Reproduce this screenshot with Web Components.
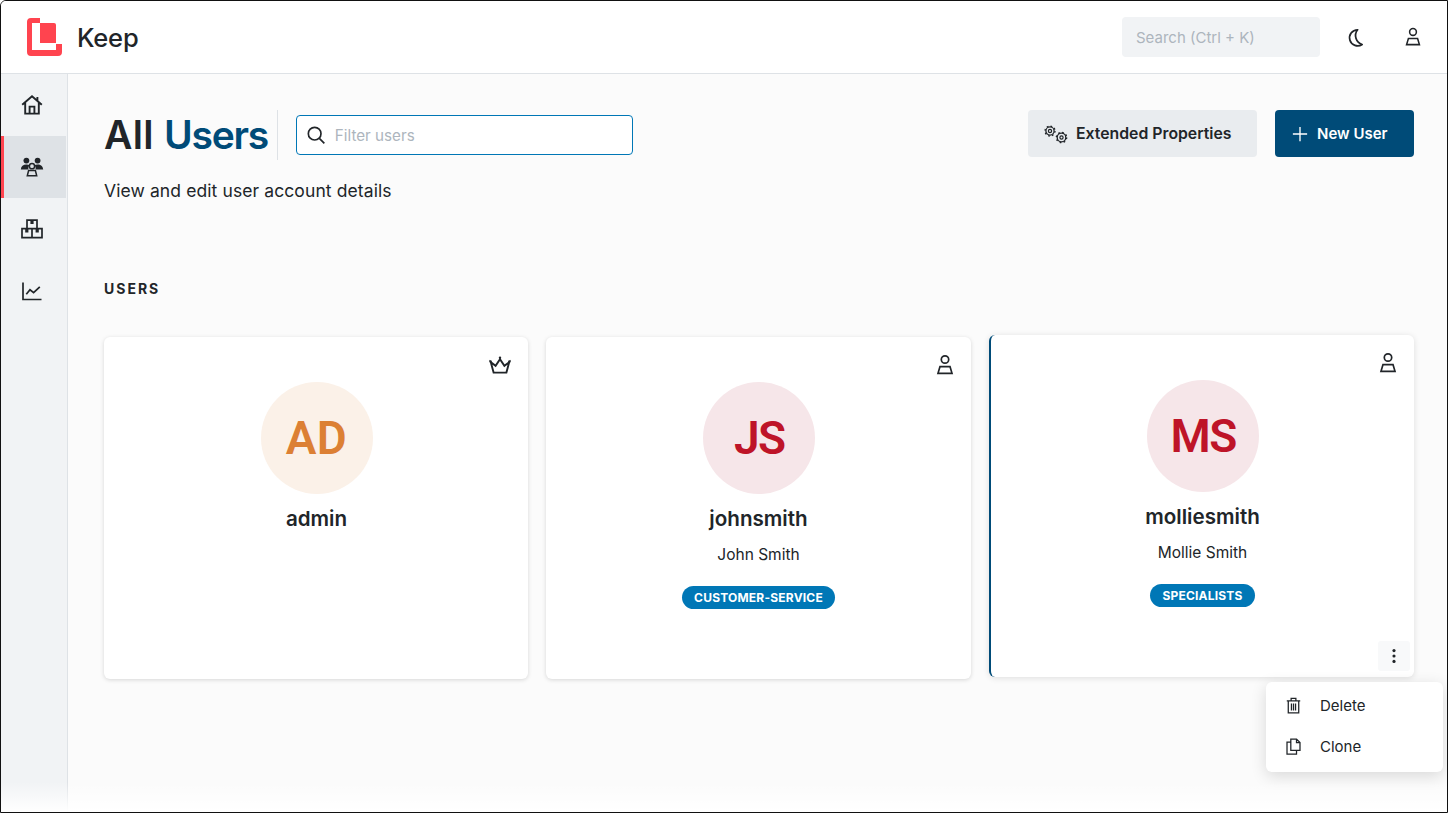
<!DOCTYPE html>
<html lang="en"><head><meta charset="utf-8"><title>Keep</title>
<style>
html,body{margin:0;height:100%;background:#fff}
body{font-family:Inter,"Liberation Sans",sans-serif;color:#212529}
</style></head><body>
<k-app>
  <k-header slot="header"></k-header>
  <k-sidebar slot="side">
    <k-nav icon="home"></k-nav>
    <k-nav icon="users" active></k-nav>
    <k-nav icon="boxes"></k-nav>
    <k-nav icon="chart"></k-nav>
  </k-sidebar>
  <k-page-head></k-page-head>
  <k-section-title>USERS</k-section-title>
  <k-grid>
    <k-user-card initials="AD" tone="orange" name="admin" role="crown"></k-user-card>
    <k-user-card initials="JS" tone="red" name="johnsmith" full="John Smith" group="CUSTOMER-SERVICE" role="user"></k-user-card>
    <k-user-card initials="MS" tone="red" name="molliesmith" full="Mollie Smith" group="SPECIALISTS" role="user" hovered></k-user-card>
  </k-grid>
</k-app>
<script>
const ICONS={
home:'<path d="M2.2 11.8 12 3.2l9.8 8.6M5.2 9.6V20.6H18.8V9.6M9.6 20.6V13.6h4.8v7M17.4 7.9V4" fill="none" stroke="currentColor" stroke-width="1.9"/>',
users:'<circle cx="6.4" cy="5.6" r="2.9" fill="currentColor"/><circle cx="17.6" cy="5.6" r="2.9" fill="currentColor"/><path d="M.8 14.6c.3-3.6 2.4-5.2 5.6-5.2 1.4 0 2.5.3 3.3.9-1.1 1-1.6 2.3-1.3 4.3zM23.2 14.6c-.3-3.6-2.4-5.2-5.6-5.2-1.4 0-2.5.3-3.3.9 1.1 1 1.6 2.3 1.3 4.3z" fill="currentColor"/><circle cx="12" cy="11.2" r="2.6" fill="none" stroke="currentColor" stroke-width="1.5"/><path d="M8.6 15.6h6.8l1.3 5.2H7.3z" fill="none" stroke="currentColor" stroke-width="1.5"/>',
boxes:'<path d="M7 11.6V3.2H17V11.6M2 11.6H22V20.6H2ZM12 11.6V20.6" fill="none" stroke="currentColor" stroke-width="1.7"/><path d="M10.4 3.2H13.6V7H10.4ZM5.2 11.6H8.4V15.4H5.2ZM15.6 11.6H18.8V15.4H15.6Z" fill="currentColor"/>',
chart:'<path d="M3 3.5V20.5H21.5" fill="none" stroke="currentColor" stroke-width="1.7"/><path d="M6.3 15.2 10 10.8l3.6 2.9 6.2-5.9" fill="none" stroke="currentColor" stroke-width="1.7"/>',
moon:'<path d="M14.4 3.2A9.2 9.2 0 1 0 19.6 20 10.6 10.6 0 0 1 14.4 3.2Z" fill="none" stroke="currentColor" stroke-width="2" stroke-linejoin="round"/>',
user:'<circle cx="12" cy="6.5" r="3.7" fill="none" stroke="currentColor" stroke-width="1.7"/><path d="M7 13.6h10l2 6.7H5z" fill="none" stroke="currentColor" stroke-width="1.7"/>',
crown:'<path d="M5.6 19.6H18.4L21.2 9.2l-4.8 3.6L12 6.2l-4.4 6.6L2.8 9.2Z" fill="none" stroke="currentColor" stroke-width="1.9"/><circle cx="2.6" cy="8.4" r="1.2" fill="currentColor"/><circle cx="21.4" cy="8.4" r="1.2" fill="currentColor"/><circle cx="12" cy="4.8" r="1.2" fill="currentColor"/>',
gears:'<g fill="none" stroke="currentColor"><circle cx="6" cy="9" r="1.6" stroke-width="1.2"/><circle cx="6" cy="9" r="4.1" stroke-width="1.3"/><circle cx="6" cy="9" r="5" stroke-width="1.3" stroke-dasharray="1.7 2.22"/><circle cx="17.5" cy="15.5" r="1.6" stroke-width="1.2"/><circle cx="17.5" cy="15.5" r="4.3" stroke-width="1.3"/><circle cx="17.5" cy="15.5" r="5.2" stroke-width="1.3" stroke-dasharray="1.7 2.38"/></g>',
plus:'<path d="M12 2.5v19M2.5 12h19" fill="none" stroke="currentColor" stroke-width="1.8"/>',
search:'<circle cx="10.4" cy="10.4" r="7.6" fill="none" stroke="currentColor" stroke-width="2"/><path d="M16 16l6 6" fill="none" stroke="currentColor" stroke-width="2"/>',
dots:'<circle cx="12" cy="5.5" r="1.9" fill="currentColor"/><circle cx="12" cy="12" r="1.9" fill="currentColor"/><circle cx="12" cy="18.5" r="1.9" fill="currentColor"/>',
trash:'<path d="M3.5 6.2h17M9 6V3h6v3M5.4 6.2V21.4H18.6V6.2M9.4 9.4v9M12 9.4v9M14.6 9.4v9" fill="none" stroke="currentColor" stroke-width="1.6"/>',
copy:'<path d="M8.6 16.8V2.6h7.2l4.4 4.4v9.8zM15.8 2.6V7h4.4M8.6 6.6H3.8V21.6H15.8V16.8" fill="none" stroke="currentColor" stroke-width="1.6"/>'
};
function def(name,css,html,init){
  customElements.define(name,class extends HTMLElement{
    connectedCallback(){
      if(this.shadowRoot)return;
      const r=this.attachShadow({mode:'open'});
      r.innerHTML='<style>'+css+'</style>'+(typeof html==='function'?html(this):html);
      if(init)init(this,r);
    }
  });
}
def('k-icon',':host{display:inline-flex;flex:none;width:var(--s,24px);height:var(--s,24px)}svg{width:100%;height:100%;display:block}',
 h=>`<svg viewBox="0 0 24 24" aria-hidden="true">${ICONS[h.getAttribute('name')]||''}</svg>`);
def('k-app',`:host{display:grid;box-sizing:border-box;height:813px;width:1448px;grid-template-columns:67px 1fr;grid-template-rows:73px 1fr;border:1px solid #111;border-radius:6px 0 0 0;overflow:hidden;background:#fbfbfb;position:relative}
 .h{grid-column:1/3}.m{padding:36px 33px 0 36px;min-width:0;position:relative}
 .fade{position:absolute;left:0;right:0;bottom:0;height:30px;background:linear-gradient(rgba(255,255,255,0),#fff);pointer-events:none;z-index:9}`,
 `<div class="h"><slot name="header"></slot></div><slot name="side"></slot><div class="m"><slot></slot></div><div class="fade"></div>`);
def('k-header',`:host{display:flex;align-items:center;height:73px;box-sizing:border-box;border-bottom:1px solid #dee2e6;background:#fff;padding:0 24px 0 25px}
 .logo{width:36px;height:40px;flex:none;display:block}
 .t{font-size:25.5px;font-weight:500;margin-left:15px;letter-spacing:-.2px;color:#212529}
 .sp{flex:1}
 .s{width:198px;height:40px;box-sizing:border-box;background:#f1f3f5;border-radius:4px;padding:0 14px;display:flex;align-items:center;font-size:15px;color:#adb5bd}
 .ic{display:flex;align-items:center;justify-content:center;color:#212529}
 .moon{margin-left:25px;width:21px;--s:21px}.usr{margin-left:36px;width:21px;--s:22px}`,
 `<svg class="logo" viewBox="26 17 36 40"><path d="M31 18h9v26h22v8a4 4 0 0 1-4 4H31a4 4 0 0 1-4-4V22a4 4 0 0 1 4-4z" fill="#ff444f"/><path d="M32 23h8v21h16v6H32z" fill="#fff"/><path d="M40 23h14a2 2 0 0 1 2 2v18H40z" fill="#ff444f"/></svg>
 <span class="t">Keep</span><span class="sp"></span><div class="s">Search (Ctrl + K)</div>
 <div class="ic moon"><k-icon name="moon"></k-icon></div><div class="ic usr"><k-icon name="user"></k-icon></div>`);
def('k-sidebar',`:host{display:block;background:#f1f3f5;border-right:1px solid #dee2e6;box-sizing:border-box;width:67px}`,`<slot></slot>`);
def('k-nav',`:host{display:flex;align-items:center;justify-content:center;height:62px;box-sizing:border-box;width:65px;padding-right:3px;color:#212529;--s:24px}
 :host([active]){background:#dee2e6;border-left:3px solid #ff444f;padding-right:6px}`,
 h=>`<k-icon name="${h.getAttribute('icon')}"></k-icon>`);
def('k-page-head',`:host{display:block;height:169px}
 .top{display:flex;align-items:flex-start}
 h1{margin:0;font-size:39px;font-weight:600;line-height:50px;letter-spacing:.35px;color:#212529;padding-right:9px;border-right:1px solid #dee2e6;white-space:nowrap}
 h1 b{font-weight:600;color:#004b78;letter-spacing:-1.25px}
 .f{margin:5px 0 0 18px;width:337px;height:40px;box-sizing:border-box;border:1px solid #0077b6;border-radius:4px;background:#fff;display:flex;align-items:center;padding-left:9px;font-size:15.2px;color:#adb5bd;--s:20px}
 .f k-icon{color:#212529;margin-right:9px}
 .sp{flex:1}
 .btn{height:47px;box-sizing:border-box;border-radius:4px;display:flex;align-items:center;font-size:15px;font-weight:600}
 .x{background:#e9ecef;color:#212529;width:229px;padding-left:16px;margin-right:18px;--s:24px;font-size:15.8px}.x k-icon{margin-right:8px}
 .n{background:#004b78;color:#fff;width:139px;padding-left:16px;--s:18px}.n k-icon{margin-right:8px}
 p{margin:17px 0 0;font-size:17.5px;letter-spacing:.1px;line-height:28px;color:#212529}`,
 `<div class="top"><h1>All <b>Users</b></h1><div class="f"><k-icon name="search"></k-icon>Filter users</div><span class="sp"></span>
  <div class="btn x"><k-icon name="gears"></k-icon>Extended Properties</div><div class="btn n"><k-icon name="plus"></k-icon>New User</div></div>
  <p>View and edit user account details</p>`);
def('k-section-title',`:host{display:block;font-size:14px;font-weight:700;letter-spacing:2px;line-height:20px;color:#212529;margin-bottom:38px;height:20px}`,`<slot></slot>`);
def('k-grid',`:host{display:grid;grid-template-columns:424fr 425fr 425fr;gap:18px}`,`<slot></slot>`);
def('k-user-card',`:host{display:flex;flex-direction:column;align-items:center;position:relative;box-sizing:border-box;height:342px;padding-top:45px;background:#fff;border-radius:6px;box-shadow:0 1px 4px rgba(0,0,0,.15)}
 :host([role=crown]){padding-left:1px}
 :host([hovered]){transform:translateY(-2px);border-left:2px solid #004b78;box-shadow:0 1px 6px rgba(0,0,0,.12)}
 .r{position:absolute;top:16px;right:14px;--s:24px;color:#212529}.r.crown{right:16px}
 .a{width:112px;height:112px;box-sizing:border-box;border-radius:50%;display:flex;align-items:center;justify-content:center;font-family:Roboto,sans-serif;font-size:46px;font-weight:600}
 .orange{background:#fbf1e8;color:#dc8034;letter-spacing:.5px}.red{background:#f6e6e9;color:#be1428;letter-spacing:-1.5px;padding-left:1.5px}
 .n{margin-top:13px;font-size:20.6px;font-weight:600;line-height:24px;color:#212529}
 .f{margin-top:14px;font-size:15.5px;line-height:20px;color:#212529}
 .g{margin-top:21px;height:23px;box-sizing:border-box;display:flex;align-items:center;padding:0 12px 1px;border-radius:12px;background:#0077b6;color:#fff;font-size:12px;font-weight:700;letter-spacing:.2px}
 .k{position:absolute;right:4px;bottom:6px;width:32px;height:30px;background:#f8f9fa;border-radius:3px;display:flex;align-items:center;justify-content:center;--s:20px;color:#212529}`,
 h=>{const a=n=>h.getAttribute(n);return `<div class="r ${a('role')}"><k-icon name="${a('role')}"></k-icon></div>
  <div class="a ${a('tone')}">${a('initials')}</div><div class="n">${a('name')}</div>
  ${a('full')?`<div class="f">${a('full')}</div>`:''}${a('group')?`<div class="g">${a('group')}</div>`:''}
  ${h.hasAttribute('hovered')?'<div class="k"><k-icon name="dots"></k-icon></div><k-menu></k-menu>':''}`});
def('k-menu',`:host{position:absolute;top:calc(100% + 5px);right:-29px;width:177px;height:90px;box-sizing:border-box;background:#fff;border-radius:6px;box-shadow:0 4px 16px rgba(0,0,0,.14);padding:3px 0;z-index:5}
 .i{display:flex;align-items:center;height:41px;padding-left:18px;font-size:15px;color:#212529;--s:19px}.i k-icon{margin-right:17px}`,
 `<div class="i"><k-icon name="trash"></k-icon>Delete</div><div class="i"><k-icon name="copy"></k-icon>Clone</div>`);
</script></body></html>
